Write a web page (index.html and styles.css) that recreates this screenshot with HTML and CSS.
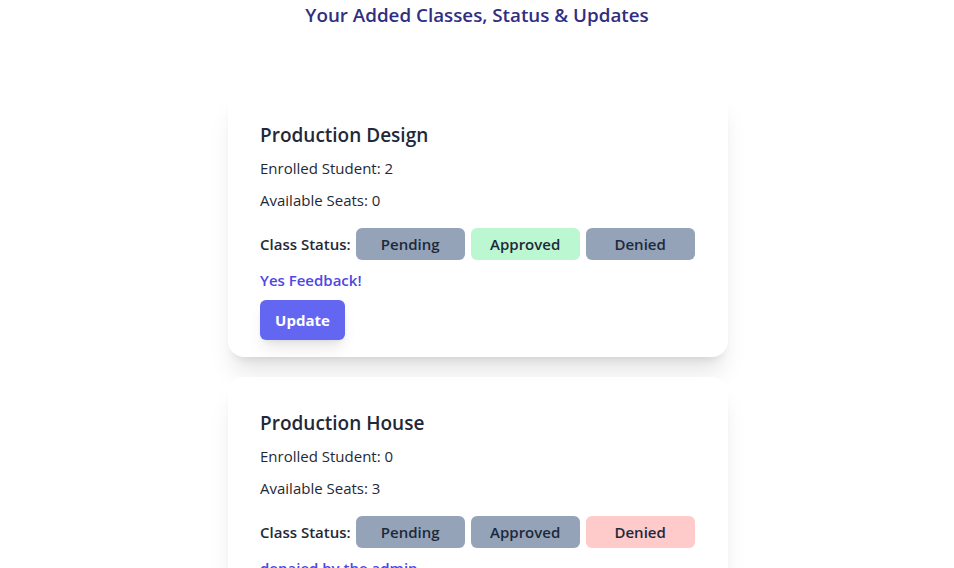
FILE: index.html
```html
<!DOCTYPE html>
<html>
<head>
<meta charset="utf-8">
<link rel="stylesheet" href="styles.css">
</head>
<body>
<h2 class="page-title">Your Added Classes, Status &amp; Updates</h2>
<div class="list">
  <div class="card">
    <h3 class="card-title">Production Design</h3>
    <p class="info">Enrolled Student: 2</p>
    <p class="info">Available Seats: 0</p>
    <div class="status-row">
      <span class="status-label">Class Status:</span>
      <span class="pill pill-gray">Pending</span>
      <span class="pill pill-green">Approved</span>
      <span class="pill pill-gray">Denied</span>
    </div>
    <p class="feedback">Yes Feedback!</p>
    <button class="update-btn">Update</button>
  </div>
  <div class="card">
    <h3 class="card-title">Production House</h3>
    <p class="info">Enrolled Student: 0</p>
    <p class="info">Available Seats: 3</p>
    <div class="status-row">
      <span class="status-label">Class Status:</span>
      <span class="pill pill-gray">Pending</span>
      <span class="pill pill-gray">Approved</span>
      <span class="pill pill-red">Denied</span>
    </div>
    <p class="feedback">denaied by the admin</p>
    <button class="update-btn">Update</button>
  </div>
</div>
</body>
</html>
```

FILE: styles.css
```css
* { box-sizing: border-box; }
html, body { margin: 0; padding: 0; background: #fff; }
body {
  font-family: "Open Sans", "Noto Sans", sans-serif;
  color: #1f2937;
  overflow: hidden;
}
.page-title {
  margin: 1px 0 0;
  text-align: center;
  font-size: 18.8px;
  line-height: 28px;
  font-weight: 600;
  color: #312e81;
}
.list {
  display: flex;
  flex-direction: column;
  align-items: center;
  gap: 20px;
  margin-top: 60px;
  padding-left: 2px;
}
.card {
  width: 500px;
  background: #fff;
  border-radius: 16px;
  padding: 32px 32px 17px;
  box-shadow: 0 20px 25px -5px rgba(0,0,0,0.1), 0 8px 10px -6px rgba(0,0,0,0.1);
}
.card-title {
  margin: 0;
  font-size: 19px;
  line-height: 28px;
  font-weight: 600;
  color: #1f2937;
}
.info {
  margin: 8px 0 0;
  font-size: 15px;
  line-height: 24px;
  color: #1f2937;
}
.card-title + .info { margin-top: 7px; }
.status-row {
  display: flex;
  align-items: center;
  margin-top: 16px;
  gap: 6px;
}
.status-label {
  flex-shrink: 0;
  white-space: nowrap;
  font-size: 15px;
  font-weight: 600;
  margin-right: -1px;
}
.pill {
  flex-shrink: 0;
  width: 109px;
  height: 32px;
  display: flex;
  align-items: center;
  justify-content: center;
  border-radius: 6px;
  font-size: 15px;
  font-weight: 600;
  color: #1e293b;
}
.pill-gray { background: #94a3b8; }
.pill-green { background: #bbf7d0; }
.pill-red { background: #fecaca; }
.feedback {
  margin: 8px 0 0;
  font-size: 15px;
  line-height: 24px;
  font-weight: 600;
  color: #4f46e5;
}
.update-btn {
  margin-top: 8px;
  display: block;
  width: 85px;
  height: 40px;
  border: 0;
  border-radius: 6px;
  background: #6366f1;
  color: #fff;
  font-family: inherit;
  font-size: 15px;
  font-weight: 700;
  box-shadow: 0 10px 15px -3px rgba(0,0,0,0.1), 0 4px 6px -4px rgba(0,0,0,0.1);
}
```
